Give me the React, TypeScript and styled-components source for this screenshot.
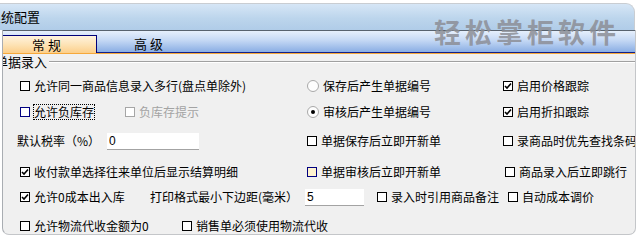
import React from "react";
import styled, { createGlobalStyle } from "styled-components";

const Global = createGlobalStyle`
  html, body { margin: 0; padding: 0; background: #ffffff; }
  body { font-family: "Noto Sans CJK SC", "Liberation Sans", sans-serif; font-size: 12px; color: #000; }
`;

const Window = styled.div`
  position: relative;
  width: 637px;
  height: 236px;
  overflow: hidden;
`;

const TitleBar = styled.div`
  margin-top: 3px;
  height: 26px;
  width: 634px;
  border-top: 1px solid #c9cdd2;
  border-right: 1px solid #c9cdd2;
  border-top-right-radius: 9px;
  background: linear-gradient(to bottom, #d6e6f6 0%, #bcd5ec 55%, #b0cce8 100%);
  display: flex;
  align-items: center;
  overflow: hidden;
`;

const TitleText = styled.span`
  font-size: 13px;
  margin-left: -12px;
  white-space: nowrap;
  line-height: 14px;
`;

const Frame = styled.div`
  margin-left: 2px;
  width: 634px;
  height: 205px;
  box-sizing: border-box;
  border-left: 1px solid #a9adb2;
  border-right: 1px solid #c4c6c9;
  border-bottom: 1px solid #c4c6c9;
  border-bottom-left-radius: 7px;
  border-bottom-right-radius: 7px;
  background: #f0f0f0;
  overflow: hidden;
`;

const TabBar = styled.div`
  height: 21px;
  margin-left: -3px;
  padding-left: 3px;
  border-top: 1px solid #58626e;
  border-bottom: 1px solid #10208a;
  background: linear-gradient(to bottom, #e6effc 0%, #c4d8f4 45%, #8aaee4 100%);
  display: flex;
  align-items: flex-end;
`;

const Tab = styled.div<{ $active?: boolean; $w: number }>`
  width: ${(p) => p.$w}px;
  height: ${(p) => (p.$active ? 18 : 17)}px;
  box-sizing: border-box;
  margin-bottom: ${(p) => (p.$active ? -1 : 0)}px;
  font-size: 13px;
  line-height: 17px;
  text-align: center;
  white-space: pre;
  ${(p) =>
    p.$active
      ? `
    border-top: 1px solid #00007a;
    border-right: 1px solid #00007a;
    background: linear-gradient(to bottom, #fff3de 0%, #fde3b6 50%, #fccf8a 100%);
    padding-right: 6px;
  `
      : `padding-left: 0;`}
`;

const Accent = styled.div`
  height: 1px;
  background: #f6a83a;
`;

const GroupHeader = styled.div`
  display: flex;
  align-items: center;
  height: 14px;
  margin-top: 1px;
`;

const GroupTitle = styled.span`
  font-size: 13px;
  line-height: 14px;
  margin-left: -8px;
  margin-right: 2px;
  white-space: nowrap;
`;

const GroupLine = styled.div`
  flex: 1;
  height: 1px;
  background: #a0a0a0;
  box-shadow: 0 1px 0 #ffffff;
  margin-top: -1px;
`;

const Row = styled.div<{ $mt: number; $pl: number }>`
  display: flex;
  align-items: center;
  height: 20px;
  margin-top: ${(p) => p.$mt}px;
  padding-left: ${(p) => p.$pl}px;
  white-space: nowrap;
`;

const Cell = styled.div<{ $w?: number }>`
  display: flex;
  align-items: center;
  flex: none;
  ${(p) => (p.$w ? `width: ${p.$w}px;` : "")}
`;

const Box = styled.span<{ $variant?: "normal" | "focus" | "disabled" | "cream" }>`
  width: 10px;
  height: 10px;
  box-sizing: border-box;
  flex: none;
  display: inline-flex;
  align-items: center;
  justify-content: center;
  border: 1px solid
    ${(p) =>
      p.$variant === "disabled"
        ? "#a6a6a6"
        : p.$variant === "focus" || p.$variant === "cream"
        ? "#000080"
        : "#000"};
  background: ${(p) => (p.$variant === "cream" ? "#fff3cf" : "#ffffff")};
  margin-right: 4px;
`;

const RadioCircle = styled.span`
  width: 12px;
  height: 12px;
  box-sizing: border-box;
  flex: none;
  border-radius: 50%;
  border: 1px solid #a9a9a9;
  background: #fdfdfd;
  display: inline-flex;
  align-items: center;
  justify-content: center;
  margin-right: 4px;
`;

const Dot = styled.span`
  width: 4px;
  height: 4px;
  border-radius: 50%;
  background: #000;
`;

const Text = styled.span<{ $disabled?: boolean; $focus?: boolean }>`
  line-height: 14px;
  color: ${(p) => (p.$disabled ? "#a3a3a3" : "#000")};
  ${(p) => (p.$focus ? "outline: 1px dotted #000; outline-offset: 0px;" : "")}
`;

const Label = styled.span<{ $w: number }>`
  width: ${(p) => p.$w}px;
  flex: none;
  line-height: 14px;
`;

const Field = styled.input<{ $w: number }>`
  width: ${(p) => p.$w}px;
  height: 17px;
  box-sizing: border-box;
  border: none;
  border-bottom: 1px solid #a3a3a3;
  background: #ffffff;
  padding: 0 0 0 2px;
  margin: 0;
  font-family: "Liberation Sans", "Noto Sans CJK SC", sans-serif;
  font-size: 12px;
  color: #000;
  outline: none;
`;

const Watermark = styled.div`
  position: absolute;
  left: 434px;
  top: 16px;
  font-size: 27px;
  font-weight: 700;
  letter-spacing: 4px;
  line-height: 31px;
  color: rgba(140, 142, 150, 0.85);
  font-family: "Noto Sans CJK SC", sans-serif;
  white-space: nowrap;
  pointer-events: none;
`;

const Tick = () => (
  <svg width="8" height="8" viewBox="0 0 8 8">
    <polyline points="1,4 3,6 7,1.5" fill="none" stroke="#000" strokeWidth="1.6" />
  </svg>
);

type CheckProps = {
  label: string;
  checked?: boolean;
  variant?: "normal" | "focus" | "disabled" | "cream";
  w?: number;
};

const Check = ({ label, checked, variant = "normal", w }: CheckProps) => (
  <Cell $w={w}>
    <Box $variant={variant}>{checked && <Tick />}</Box>
    <Text $disabled={variant === "disabled"} $focus={variant === "focus"}>
      {label}
    </Text>
  </Cell>
);

const Radio = ({ label, checked, w }: { label: string; checked?: boolean; w?: number }) => (
  <Cell $w={w}>
    <RadioCircle>{checked && <Dot />}</RadioCircle>
    <Text>{label}</Text>
  </Cell>
);

export default function App() {
  return (
    <>
      <Global />
      <Window>
        <TitleBar>
          <TitleText>系统配置</TitleText>
        </TitleBar>
        <Frame>
          <TabBar>
            <Tab $active $w={94}>常 规</Tab>
            <Tab $w={103}>高 级</Tab>
          </TabBar>
          <Accent />
          <GroupHeader>
            <GroupTitle>单据录入</GroupTitle>
            <GroupLine />
          </GroupHeader>
          <Row $mt={7} $pl={17}>
            <Check w={287} label="允许同一商品信息录入多行(盘点单除外)" />
            <Radio w={196} label="保存后产生单据编号" />
            <Check checked label="启用价格跟踪" />
          </Row>
          <Row $mt={6} $pl={17}>
            <Check w={105} variant="focus" label="允许负库存" />
            <Check w={182} variant="disabled" label="负库存提示" />
            <Radio w={196} checked label="审核后产生单据编号" />
            <Check checked label="启用折扣跟踪" />
          </Row>
          <Row $mt={9} $pl={14}>
            <Label $w={90}>默认税率（%）</Label>
            <Cell $w={200}>
              <Field $w={92} defaultValue="0" readOnly />
            </Cell>
            <Check w={196} label="单据保存后立即开新单" />
            <Check label="录商品时优先查找条码" />
          </Row>
          <Row $mt={11} $pl={17}>
            <Check w={287} checked label="收付款单选择往来单位后显示结算明细" />
            <Check w={198} variant="cream" label="单据审核后立即开新单" />
            <Check label="商品录入后立即跳行" />
          </Row>
          <Row $mt={5} $pl={17}>
            <Check w={130} checked label="允许0成本出入库" />
            <Label $w={155}>打印格式最小下边距(毫米）</Label>
            <Cell $w={72}>
              <Field $w={59} defaultValue="5" readOnly />
            </Cell>
            <Check w={131} label="录入时引用商品备注" />
            <Check label="自动成本调价" />
          </Row>
          <Row $mt={9} $pl={17}>
            <Check w={162} label="允许物流代收金额为0" />
            <Check label="销售单必须使用物流代收" />
          </Row>
        </Frame>
        <Watermark>轻松掌柜软件</Watermark>
      </Window>
    </>
  );
}
